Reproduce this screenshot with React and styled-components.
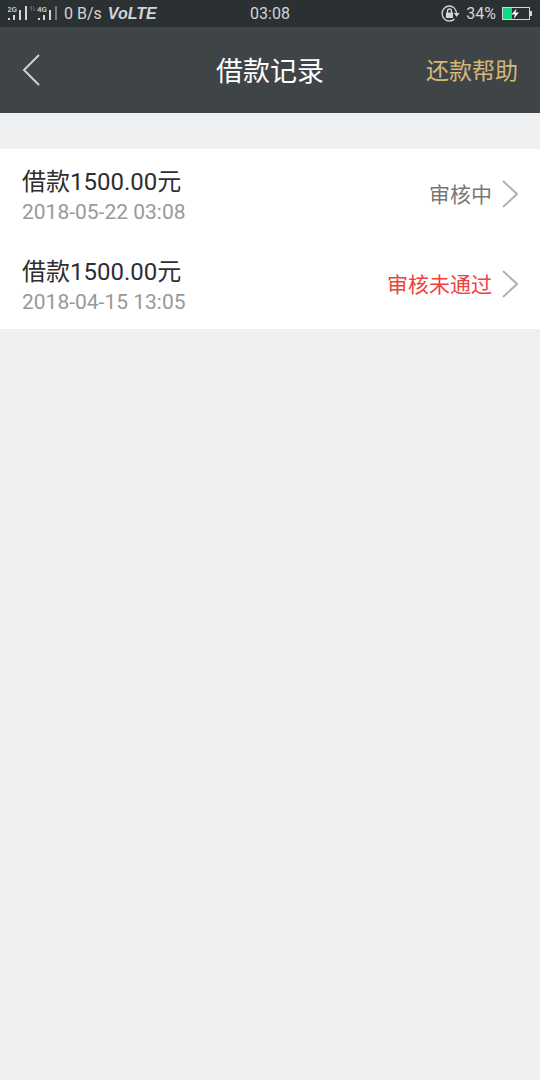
import React from 'react'
import styled, { createGlobalStyle } from 'styled-components'

const GlobalStyle = createGlobalStyle`
  * {
    box-sizing: border-box;
  }

  body {
    margin: 0;
    background: #eeeff1;
    font-family: Roboto, 'Noto Sans CJK SC', sans-serif;
  }

  button {
    padding: 0;
    border: 0;
    background: none;
    font: inherit;
    color: inherit;
    cursor: pointer;
  }
`

const StatusBar = styled.div`
  display: grid;
  grid-template-columns: 1fr auto 1fr;
  align-items: center;
  height: 27px;
  padding: 0 8px;
  background: #2b3033;
  color: #d3d5d6;
  font-size: 16px;
  line-height: 28px;
`

const StatusGroup = styled.div`
  display: flex;
  align-items: center;
  justify-content: ${props => props.$align || 'flex-start'};
  gap: 6px;
  white-space: nowrap;
`

const Volte = styled.span`
  font-family: 'Liberation Sans', sans-serif;
  font-size: 16px;
  font-style: italic;
  font-weight: 700;
`

const Header = styled.header`
  display: grid;
  grid-template-columns: 1fr auto 1fr;
  align-items: center;
  height: 86px;
  padding: 0 22px;
  background: #3f4447;
`

const BackButton = styled.button`
  display: flex;
  justify-self: start;
`

const Title = styled.h1`
  margin: 0;
  padding-top: 4px;
  color: #fff;
  font-size: 27px;
  font-weight: 400;
  line-height: 40px;
`

const HelpLink = styled.a`
  justify-self: end;
  padding-top: 4px;
  color: #d4b878;
  font-size: 23px;
  line-height: 40px;
  text-decoration: none;
`

const RecordList = styled.ul`
  margin: 36px 0 0;
  padding: 0;
  background: #fff;
  list-style: none;
`

const RecordButton = styled.button`
  display: flex;
  align-items: center;
  justify-content: space-between;
  width: 100%;
  height: 90px;
  padding: 0 22px;
  text-align: left;
`

const RecordInfo = styled.span`
  display: flex;
  flex-direction: column;
  padding-top: 2px;
`

const Amount = styled.span`
  color: #2e2e2e;
  font-size: 24px;
  line-height: 34px;
`

const Time = styled.time`
  color: #999;
  font-size: 21px;
  line-height: 26px;
`

const RecordState = styled.span`
  display: flex;
  align-items: center;
  gap: 10px;
`

const Status = styled.span`
  padding-top: 2px;
  color: ${props => (props.$failed ? '#f04040' : '#777')};
  font-size: 21px;
  line-height: 28px;
`

const SignalIcon = () => (
  <svg width="50" height="16" viewBox="0 0 50 16" aria-hidden="true">
    <g fill="#d3d5d6" fontFamily="Roboto, sans-serif" fontSize="8" fontWeight="500">
      <text x="-1" y="6">2G</text>
      <text x="29" y="6">4G</text>
    </g>
    <g fill="#d3d5d6">
      <rect x="0" y="12" width="2" height="2" />
      <rect x="5" y="9" width="2" height="5" />
      <rect x="11" y="4" width="2" height="10" />
      <rect x="17" y="0" width="2" height="14" />
      <rect x="30" y="12" width="2" height="2" />
      <rect x="35" y="9" width="2" height="5" />
      <rect x="41" y="4" width="2" height="10" />
    </g>
    <rect x="47" y="0" width="2" height="14" fill="#777b7d" />
    <path d="M23.500 5V0L21.500 2.500M25.500 0v5l2-2.500" stroke="#5d6164" fill="none" />
  </svg>
)

const RotationLockIcon = () => (
  <svg width="19" height="18" viewBox="0 0 19 18" fill="none" aria-hidden="true">
    <path d="M15.500 8A7.200 7.500 0 1 0 8.500 16" stroke="#d3d5d6" strokeWidth="1.300" />
    <path d="M8.500 16q3 0 5-2" stroke="#d3d5d6" strokeWidth="1.300" />
    <path d="M12.800 8h5.800l-2.900 4z" fill="#d3d5d6" />
    <path d="M5 7.500h7v5.500H5z" fill="#d3d5d6" />
    <path d="M6.500 8V6a2 2 0 0 1 4 0V8" stroke="#d3d5d6" strokeWidth="1.300" />
  </svg>
)

const BatteryIcon = () => (
  <svg width="30" height="14" viewBox="0 0 30 14" aria-hidden="true">
    <rect x="0.500" y="0.500" width="27" height="12" fill="none" stroke="#d3d5d6" />
    <rect x="28" y="4" width="2" height="5" fill="#d3d5d6" />
    <rect x="1" y="1" width="9" height="11" fill="#10d884" />
    <path d="M14.500 1.500L9.500 7.500h3.500l-1.500 4.500 5.500-6.500h-3.500z" fill="#fff" />
  </svg>
)

const BackIcon = () => (
  <svg width="19" height="32" viewBox="0 0 19 32" fill="none" aria-hidden="true">
    <path d="M17 1L2 16l15 15" stroke="#cfd1d2" strokeWidth="2" />
  </svg>
)

const ChevronIcon = () => (
  <svg width="16" height="28" viewBox="0 0 16 28" fill="none" aria-hidden="true">
    <path d="M1 1l14 13L1 27" stroke="#b0b0b0" strokeWidth="2" />
  </svg>
)

const records = [
  { amount: '1500.00', time: '2018-05-22 03:08', status: '审核中' },
  { amount: '1500.00', time: '2018-04-15 13:05', status: '审核未通过', failed: true },
]

const Record = ({ amount, time, status, failed }) => (
  <li>
    <RecordButton type="button">
      <RecordInfo>
        <Amount>借款{amount}元</Amount>
        <Time dateTime={time}>{time}</Time>
      </RecordInfo>
      <RecordState>
        <Status $failed={failed}>{status}</Status>
        <ChevronIcon />
      </RecordState>
    </RecordButton>
  </li>
)

const App = () => (
  <>
    <GlobalStyle />
    <StatusBar>
      <StatusGroup>
        <SignalIcon />
        <span>0 B/s</span>
        <Volte>VoLTE</Volte>
      </StatusGroup>
      <span>03:08</span>
      <StatusGroup $align="flex-end">
        <RotationLockIcon />
        <span>34%</span>
        <BatteryIcon />
      </StatusGroup>
    </StatusBar>
    <Header>
      <BackButton type="button" aria-label="返回">
        <BackIcon />
      </BackButton>
      <Title>借款记录</Title>
      <HelpLink href="#help">还款帮助</HelpLink>
    </Header>
    <main>
      <RecordList>
        {records.map(record => (
          <Record key={record.time} {...record} />
        ))}
      </RecordList>
    </main>
  </>
)

export default App
